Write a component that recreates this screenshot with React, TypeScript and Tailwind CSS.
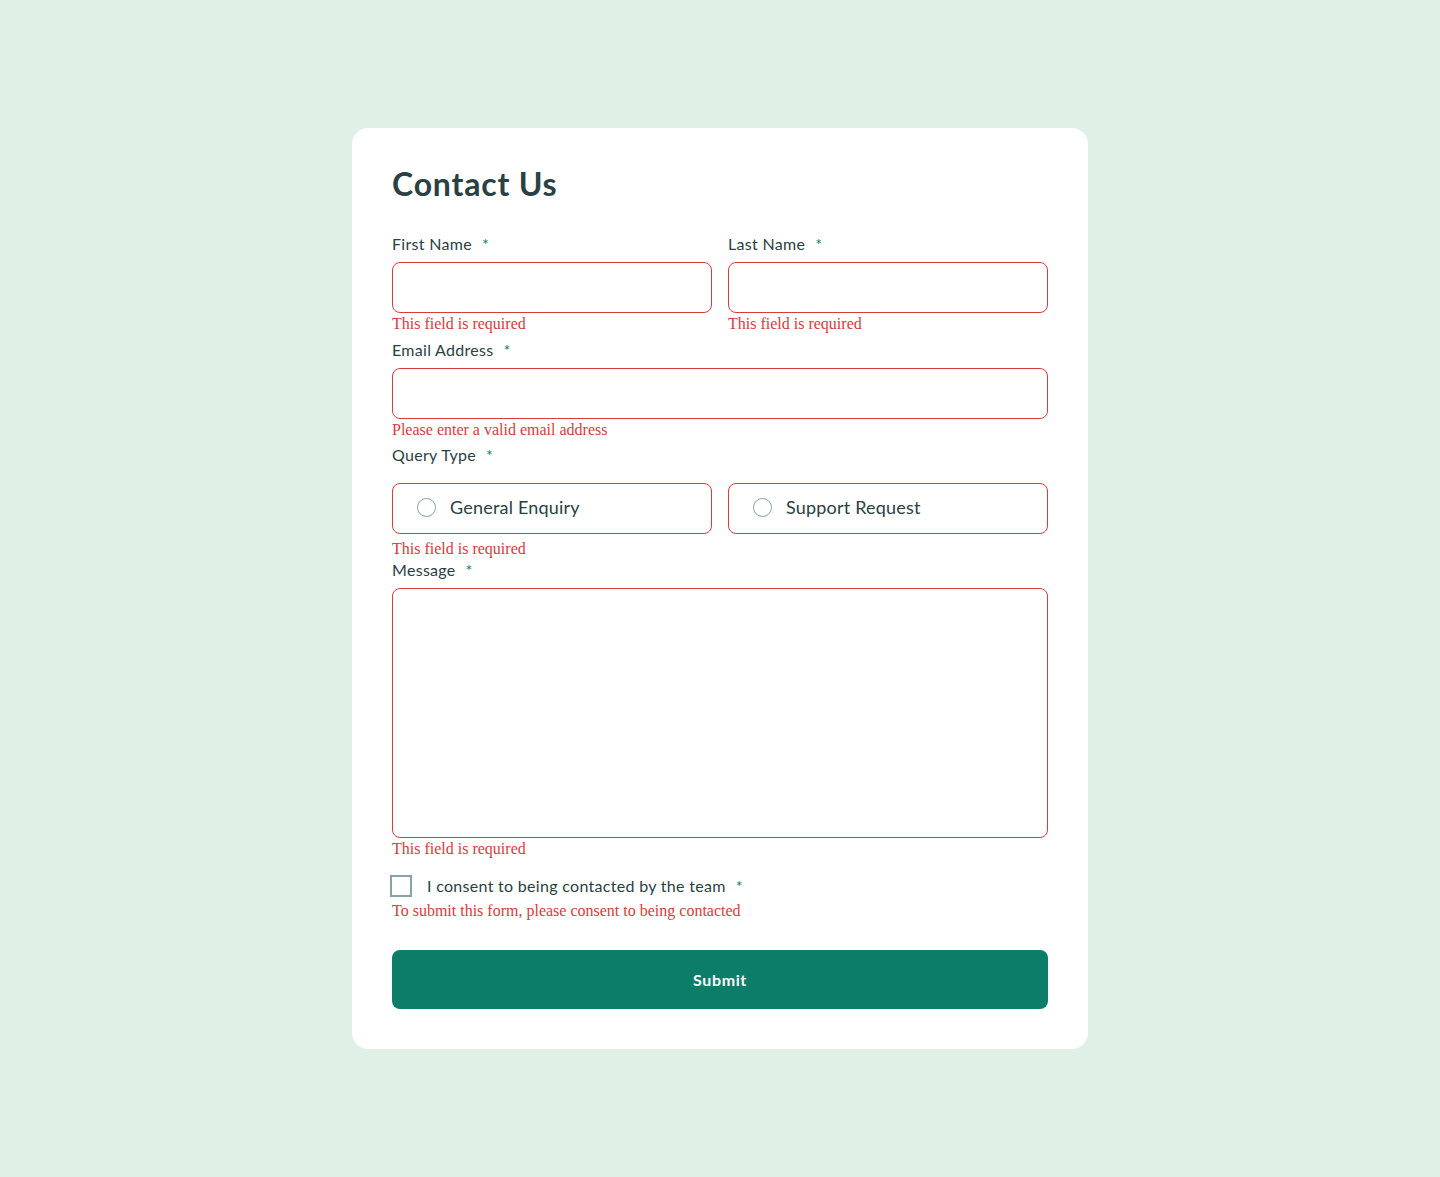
import React from 'react';

const font = { fontFamily: 'Lato, "Open Sans", sans-serif' };

function Label({ children }: { children: React.ReactNode }) {
  return (
    <div className="h-6 leading-6 text-base tracking-[0.3px] text-[#2a4144]">
      {children}
      <span className="ml-[10px] text-[#0c7d69]">*</span>
    </div>
  );
}

function ErrorText({ children }: { children: React.ReactNode }) {
  return (
    <p className="pt-[2px] text-base leading-[18px] text-[#d73c3c] font-['Liberation_Serif',serif]">
      {children}
    </p>
  );
}

function TextField({ label, error }: { label: string; error: string }) {
  return (
    <div className="flex flex-col">
      <Label>{label}</Label>
      <input className="mt-[6px] h-[51px] w-full rounded-lg border border-[#d73c3c] px-6 outline-none" />
      <ErrorText>{error}</ErrorText>
    </div>
  );
}

function Radio({ label }: { label: string }) {
  return (
    <label className="flex h-[51px] items-center rounded-lg border border-[#d73c3c] pl-6">
      <span className="mb-[2px] h-[19px] w-[19px] rounded-full border border-[#87a3a6]" />
      <span className="ml-[14px] pb-[3px] text-lg tracking-[0.2px] text-[#2a4144]">{label}</span>
    </label>
  );
}

export default function App() {
  return (
    <div className="min-h-screen bg-[#dff1e7] flex justify-center pt-32 pb-32" style={font}>
      <form className="w-[736px] rounded-2xl bg-white p-10" onSubmit={(e) => e.preventDefault()}>
        <h1 className="text-[32px] leading-8 font-bold tracking-[0.8px] text-[#2a4144]">Contact Us</h1>

        <div className="mt-8 grid grid-cols-2 gap-x-4">
          <TextField label="First Name" error="This field is required" />
          <TextField label="Last Name" error="This field is required" />
        </div>

        <div className="mt-[5px]">
          <TextField label="Email Address" error="Please enter a valid email address" />
        </div>

        <div className="mt-[4px]">
          <Label>Query Type</Label>
          <div className="mt-4 grid grid-cols-2 gap-x-4">
            <Radio label="General Enquiry" />
            <Radio label="Support Request" />
          </div>
          <div className="mt-1">
            <ErrorText>This field is required</ErrorText>
          </div>
        </div>

        <div className="flex flex-col">
          <Label>Message</Label>
          <textarea className="mt-[6px] h-[250px] w-full resize-none rounded-lg border border-[#d73c3c] p-4 outline-none" />
          <ErrorText>This field is required</ErrorText>
        </div>

        <div className="mt-4 flex h-6 items-center">
          <span className="-ml-[2px] h-[22px] w-[22px] border-2 border-[#87a3a6]" />
          <span className="ml-[15px] text-base tracking-[0.3px] text-[#2a4144]">
            I consent to being contacted by the team
            <span className="ml-[10px] text-[#0c7d69]">*</span>
          </span>
        </div>
        <div className="mt-[2px]">
          <ErrorText>To submit this form, please consent to being contacted</ErrorText>
        </div>

        <button
          type="submit"
          className="mt-[30px] h-[59px] w-full rounded-lg bg-[#0c7d69] text-base font-bold tracking-[0.6px] text-white"
        >
          Submit
        </button>
      </form>
    </div>
  );
}
